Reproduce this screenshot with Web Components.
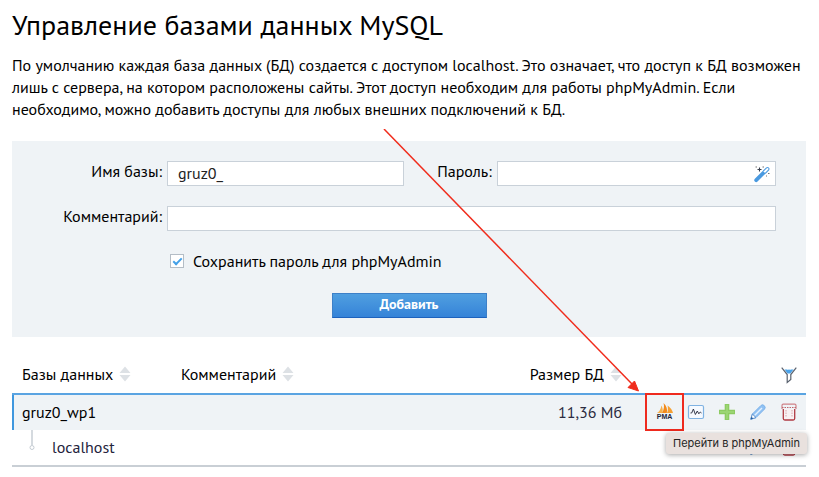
<!DOCTYPE html>
<html lang="ru">
<head>
<meta charset="utf-8">
<meta name="viewport" content="width=device-width, initial-scale=1">
<title>Управление базами данных MySQL</title>
<style>
  body {
    margin: 0;
    background: #fff;
    color: #000;
    font: 16px/22px "PT Sans", "Noto Sans", sans-serif;
  }
</style>
</head>
<body>
<db-page>
  <span slot="title">Управление базами данных MySQL</span>
  <span slot="intro">По умолчанию каждая база данных (БД) создается с доступом localhost. Это означает, что доступ к БД возможен лишь с сервера, на котором расположены сайты. Этот доступ необходим для работы phpMyAdmin. Если необходимо, можно добавить доступы для любых внешних подключений к БД.</span>
  <db-form></db-form>
  <db-table></db-table>
  <pointer-arrow></pointer-arrow>
</db-page>

<script>
const ICONS = {
  wand: `
    <path d="M2.2 14.2 10 6.4" stroke="#4a9ae0" stroke-width="3.8" stroke-linecap="round"/>
    <path d="m9.2 5.2 3.3-3.3q1-.8 2 0t.2 2L11.300 7.300" fill="#fff" stroke="#4a9ae0" stroke-width="1.100"/>
    <path d="M5.500 1.500v4M3.500 3.500h4" stroke="#333a48" stroke-width="1.100"/>
    <path d="M1.500 1h1.500M8.500 1H10M14 7.500h1.500M12 10h1" stroke="#777" stroke-width="1.200"/>`,
  pma: `
    <path d="M0 10C2.500 8.500 4 6 4.300 2.500 6 5 6 7.500 5.300 10Z" fill="#f7b049"/>
    <path d="M5 10C7 6.500 7.500 3 6.500 0c3.200 3 4.100 6 3.300 10Z" fill="#f28a1a"/>
    <path d="M10 10c1.100-2.500 1.100-4.500.6-7.500C13.500 4.500 15.500 7.500 16 10Z" fill="#f5a033"/>`,
  chart: `
    <rect x=".5" y="1.500" width="15" height="13" rx="1.500" fill="#f6faff" stroke="#7fb2e2" stroke-width="1.200"/>
    <path d="M2.500 9h1.200l1.700-4 2 5.500L9.300 7l1.500 2.800L12.300 8l1.200 1" stroke="#35394a" stroke-width="1"/>`,
  plus: `
    <path d="M8 0v16M0 8h16" stroke="#8dcb62" stroke-width="4.600"/>
    <path d="M8 1v14M1 8h14" stroke="#9bd573" stroke-width="2"/>`,
  pencil: `
    <path d="m.8 15.200 1.600-5.200L11 1.400q1.700-1.400 3.300.3t.3 3.300L6 13.600Z" fill="#8fc1f3" stroke="#7cb3ea" stroke-width="1"/>
    <path d="m4.500 11.500 7.500-7.500" stroke="#e4f1ff" stroke-width="1.500"/>
    <path d="m.8 15.200 1.600-5.200L6 13.600Z" fill="#fff" stroke="#5d90cc" stroke-width="1"/>
    <path d="m.6 15.400 1-2.600 1.600 1.600Z" fill="#245c9e"/>`,
  trash: `
    <path d="M1 5V1.500Q1 .2 2.300.2h11.400Q15 .2 15 1.500V5" stroke="#cf8288" stroke-width="1.200"/>
    <path d="M1 3.500h14" stroke="#c0666d" stroke-width="1" stroke-dasharray="1.500 1"/>
    <path d="M2.300 5v9.500q0 1.500 1.500 1.500h8.400q1.500 0 1.500-1.500V5" fill="#f8f1f3" stroke="#b03a43" stroke-width="1.300"/>
    <path d="M5 6v7M11 6v7" stroke="#d9a5aa" stroke-width="1" stroke-dasharray="1.500 1"/>`,
  filter: `
    <path d="M3.500 2.500h9L9.500 6.500h-3Z" fill="#4aa3ea"/>
    <path d="M.7.7 6.200 7.500V15.500L9.800 12.500v-5L15.300.7" stroke="#59616e" stroke-width="1.200"/>
    <path d="M6.300 2.200q1.700-1.200 3.400 0" stroke="#fff" stroke-width="1"/>`
};

class UiIcon extends HTMLElement {
  constructor() {
    super();
    this.attachShadow({ mode: 'open' });
  }

  connectedCallback() {
    this.shadowRoot.innerHTML = `
      <style>
        :host { display: inline-block; width: 16px; height: 16px; }
        svg { display: block; width: 100%; height: 100%; overflow: visible; }
      </style>
      <svg viewBox="0 0 16 16" fill="none" aria-hidden="true">${ICONS[this.getAttribute('name')]}</svg>
    `;
  }
}

class PmaLogo extends HTMLElement {
  constructor() {
    super();
    this.attachShadow({ mode: 'open' }).innerHTML = `
      <style>
        :host {
          display: flex;
          flex-direction: column;
          align-items: center;
          font: bold 7px/7px "Liberation Sans", sans-serif;
          color: #22263a;
        }
        svg { display: block; width: 16px; height: 10px; }
      </style>
      <svg viewBox="0 0 16 10" aria-hidden="true">${ICONS.pma}</svg>
      <span>PMA</span>
    `;
  }
}

class SortMark extends HTMLElement {
  constructor() {
    super();
    this.attachShadow({ mode: 'open' }).innerHTML = `
      <style>
        :host { display: inline-block; width: 12px; height: 16px; }
        svg { display: block; }
      </style>
      <svg width="12" height="16" viewBox="0 0 12 16" aria-hidden="true">
        <path d="M.5 7 6 .5 11.500 7ZM.5 9h11L6 15.500Z" fill="#dde1e5"/>
      </svg>
    `;
  }
}

class DbField extends HTMLElement {
  constructor() {
    super();
    this.attachShadow({ mode: 'open' });
  }

  connectedCallback() {
    const label = this.getAttribute('label');
    const type = this.getAttribute('type') || 'text';
    const value = this.getAttribute('value') || '';

    this.shadowRoot.innerHTML = `
      <style>
        :host { display: flex; gap: 5px; }
        label {
          flex: none;
          width: var(--label-width, 150px);
          line-height: 20px;
          text-align: right;
          white-space: nowrap;
        }
        .box {
          display: flex;
          align-items: center;
          flex: 1;
          min-width: 0;
          height: 25px;
          padding-right: 5px;
          box-sizing: border-box;
          background: #fff;
          border: 1px solid #c9d1d9;
        }
        input {
          flex: 1;
          min-width: 0;
          height: 23px;
          padding: 0 10px 2px;
          border: 0;
          outline: 0;
          box-sizing: border-box;
          background: none;
          color: #222;
          font: inherit;
        }
      </style>
      <label for="field">${label}</label>
      <div class="box">
        <input id="field" type="${type}" value="${value}">
        <slot></slot>
      </div>
    `;
  }
}

class DbForm extends HTMLElement {
  constructor() {
    super();
    this.attachShadow({ mode: 'open' }).innerHTML = `
      <style>
        :host { display: block; background: #eff3f6; }
        form {
          display: flex;
          flex-direction: column;
          gap: 20px;
          padding: 20px 0 19px;
        }
        .pair {
          display: grid;
          grid-template-columns: 20fr 19fr;
          margin-right: 30px;
        }
        .password { --label-width: 88px; }
        .comment { margin-right: 30px; }
        .save {
          display: flex;
          align-items: center;
          gap: 9px;
          padding: 0 0 2px 158px;
          line-height: 20px;
        }
        input {
          appearance: none;
          width: 14px;
          height: 14px;
          margin: 0;
          box-sizing: border-box;
          border: 1px solid #b4bdc6;
          background: #fff;
          display: grid;
          place-items: center;
        }
        input:checked::before {
          content: "";
          width: 9px;
          height: 5px;
          margin-bottom: 2px;
          box-sizing: border-box;
          border: solid #43a0e8;
          border-width: 0 0 2px 2px;
          transform: rotate(-45deg);
        }
        .icon-button {
          display: flex;
          padding: 0;
          border: 0;
          background: none;
        }
        .submit {
          align-self: center;
          width: 155px;
          height: 25px;
          padding: 0 0 4px;
          border: 1px solid #3d80c8;
          border-bottom-color: #1d62bd;
          background: linear-gradient(#509fe0, #3583d8);
          color: #fff;
          font: 600 14px/18px "PT Sans", "Noto Sans", sans-serif;
        }
      </style>
      <form>
        <div class="pair">
          <db-field label="Имя базы:" value="gruz0_"></db-field>
          <db-field class="password" label="Пароль:" type="password">
            <button type="button" class="icon-button" aria-label="Сгенерировать пароль"><ui-icon name="wand"></ui-icon></button>
          </db-field>
        </div>
        <db-field class="comment" label="Комментарий:"></db-field>
        <div class="save">
          <input type="checkbox" id="save" checked>
          <label for="save">Сохранить пароль для phpMyAdmin</label>
        </div>
        <button type="button" class="submit">Добавить</button>
      </form>
    `;
  }
}

class HintBubble extends HTMLElement {
  constructor() {
    super();
    this.attachShadow({ mode: 'open' }).innerHTML = `
      <style>
        :host {
          display: block;
          padding: 0 7px;
          border-radius: 3px;
          background: #e9e1de;
          box-shadow: 0 1px 5px rgba(0, 0, 0, 0.35);
          color: #252525;
          font: 11px/21px Inter, sans-serif;
          white-space: nowrap;
        }
      </style>
      <slot></slot>
    `;
  }
}

class DbTable extends HTMLElement {
  constructor() {
    super();
    this.attachShadow({ mode: 'open' }).innerHTML = `
      <style>
        :host { display: block; }
        table {
          width: 100%;
          table-layout: fixed;
          border-collapse: separate;
          border-spacing: 0;
          border-bottom: 2px solid #c9cfd5;
        }
        .name { width: 158px; }
        .size { width: 120px; }
        .tools { width: 184px; }
        th, td {
          height: 35px;
          padding: 0 0 2px;
          box-sizing: border-box;
          font-weight: normal;
          text-align: left;
          white-space: nowrap;
        }
        th {
          height: 38px;
          border-bottom: 2px solid #5aa4e2;
        }
        th:last-child { padding-bottom: 0; }
        th:first-child { padding-left: 10px; }
        th:nth-child(2), td:nth-child(2) { padding-left: 11px; }
        .sort {
          display: inline-flex;
          align-items: center;
          gap: 6px;
          padding: 0;
          border: 0;
          background: none;
          color: inherit;
          font: inherit;
        }
        td.right, th.right { text-align: right; }
        td.right { color: #2b2b40; }
        .database { background: #eff3f6; }
        .database td:first-child {
          padding-left: 8px;
          border-left: 2px solid #3f97de;
        }
        .actions {
          display: flex;
          justify-content: flex-end;
          padding-right: 2px;
        }
        .actions button {
          display: flex;
          align-items: center;
          justify-content: center;
          width: 31px;
          height: 33px;
          padding: 0;
          border: 0;
          background: none;
        }
        .wrap { position: relative; display: flex; }
        .frame {
          position: absolute;
          inset: -2px -4px -3px;
          border: 2px solid #ee2a1e;
          pointer-events: none;
        }
        hint-bubble {
          position: absolute;
          top: 38px;
          left: 17px;
          z-index: 1;
        }
        .host {
          display: flex;
          gap: 15px;
          padding-left: 15px;
          color: #23233c;
        }
        .host svg { display: block; flex: none; }
        .host span { align-self: center; }
      </style>
      <table>
        <colgroup><col class="name"><col><col class="size"><col class="tools"></colgroup>
        <thead>
          <tr>
            <th><button class="sort">Базы данных <sort-mark></sort-mark></button></th>
            <th><button class="sort">Комментарий <sort-mark></sort-mark></button></th>
            <th class="right"><button class="sort">Размер БД <sort-mark></sort-mark></button></th>
            <th><div class="actions"><button aria-label="Фильтр"><ui-icon name="filter"></ui-icon></button></div></th>
          </tr>
        </thead>
        <tbody>
          <tr class="database">
            <td>gruz0_wp1</td>
            <td></td>
            <td class="right">11,36 Мб</td>
            <td>
              <div class="actions">
                <div class="wrap">
                  <button aria-label="Перейти в phpMyAdmin"><pma-logo></pma-logo></button>
                  <span class="frame"></span>
                  <hint-bubble>Перейти в phpMyAdmin</hint-bubble>
                </div>
                <button aria-label="Статистика"><ui-icon name="chart"></ui-icon></button>
                <button aria-label="Добавить доступ"><ui-icon name="plus"></ui-icon></button>
                <button aria-label="Изменить"><ui-icon name="pencil"></ui-icon></button>
                <button aria-label="Удалить"><ui-icon name="trash"></ui-icon></button>
              </div>
            </td>
          </tr>
          <tr>
            <td>
              <div class="host">
                <svg width="10" height="33" viewBox="0 0 10 33" aria-hidden="true">
                  <path d="M5 0v15" stroke="#d5dadf" stroke-width="2"/>
                  <circle cx="5" cy="17.500" r="2" fill="#fff" stroke="#c5ccd3"/>
                </svg>
                <span>localhost</span>
              </div>
            </td>
            <td></td>
            <td></td>
            <td>
              <div class="actions">
                <button aria-label="Изменить"><ui-icon name="pencil"></ui-icon></button>
                <button aria-label="Удалить"><ui-icon name="trash"></ui-icon></button>
              </div>
            </td>
          </tr>
        </tbody>
      </table>
    `;
  }
}

// Free-standing annotation drawn over the page
class PointerArrow extends HTMLElement {
  constructor() {
    super();
    this.attachShadow({ mode: 'open' }).innerHTML = `
      <style>
        :host {
          display: block;
          position: absolute;
          top: 129px;
          right: 180px;
          pointer-events: none;
        }
        svg { display: block; }
      </style>
      <svg width="256" height="263" viewBox="0 0 256 263" aria-hidden="true">
        <path d="M1 0 249 255" stroke="#f02c1c" stroke-width="1.500"/>
        <path d="m255.500 262-10.500-3.500 6.500-6.500Z" fill="#f02c1c" stroke="#f02c1c"/>
      </svg>
    `;
  }
}

class DbPage extends HTMLElement {
  constructor() {
    super();
    this.attachShadow({ mode: 'open' }).innerHTML = `
      <style>
        :host {
          display: block;
          position: relative;
          padding: 9px 13px 10px 12px;
        }
        h1 {
          margin: 0 0 13px;
          font-size: 28px;
          line-height: 32px;
          font-weight: normal;
        }
        p { margin: 0 0 1px; }
        main {
          display: flex;
          flex-direction: column;
          gap: 20px;
        }
      </style>
      <main>
        <header>
          <h1><slot name="title"></slot></h1>
          <p><slot name="intro"></slot></p>
        </header>
        <slot></slot>
      </main>
    `;
  }
}

customElements.define('ui-icon', UiIcon);
customElements.define('pma-logo', PmaLogo);
customElements.define('sort-mark', SortMark);
customElements.define('hint-bubble', HintBubble);
customElements.define('db-field', DbField);
customElements.define('db-form', DbForm);
customElements.define('db-table', DbTable);
customElements.define('pointer-arrow', PointerArrow);
customElements.define('db-page', DbPage);
</script>
</body>
</html>
